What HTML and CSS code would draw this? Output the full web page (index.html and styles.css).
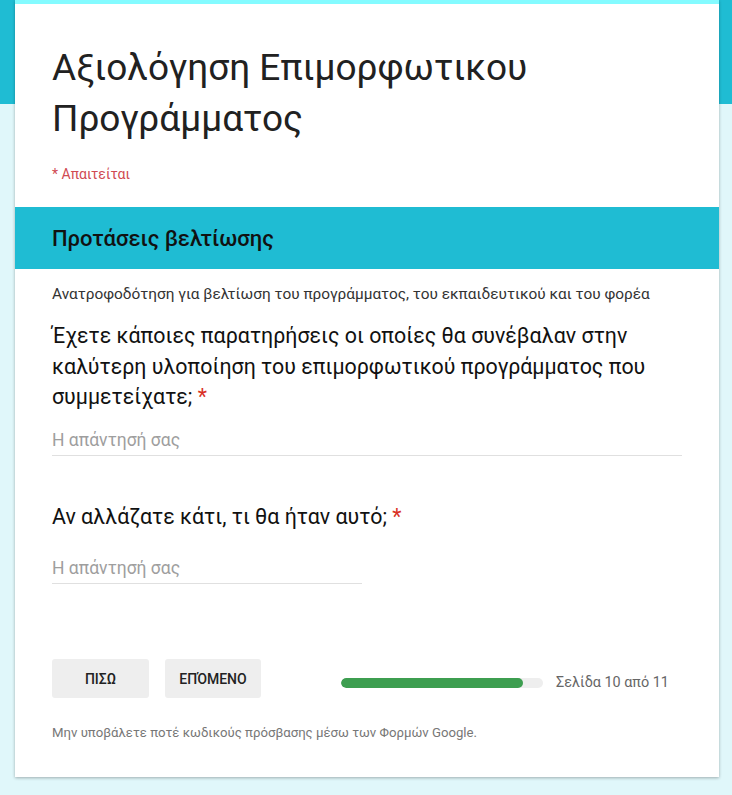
FILE: index.html
```html
<!DOCTYPE html>
<html lang="el">
<head>
<meta charset="utf-8">
<title>Αξιολόγηση Επιμορφωτικου Προγράμματος</title>
<link rel="stylesheet" href="styles.css">
</head>
<body>
<div class="card">
  <div class="header">
    <h1 class="title">Αξιολόγηση Επιμορφωτικου Προγράμματος</h1>
    <div class="required-note">* Απαιτείται</div>
  </div>
  <div class="section-bar">Προτάσεις βελτίωσης</div>
  <div class="body">
    <div class="description">Ανατροφοδότηση για βελτίωση του προγράμματος, του εκπαιδευτικού και του φορέα</div>
    <div class="question q1">
      <div class="q-text">Έχετε κάποιες παρατηρήσεις οι οποίες θα συνέβαλαν στην καλύτερη υλοποίηση του επιμορφωτικού προγράμματος που συμμετείχατε; <span class="star">*</span></div>
      <div class="answer wide">Η απάντησή σας</div>
    </div>
    <div class="question q2">
      <div class="q-text">Αν αλλάζατε κάτι, τι θα ήταν αυτό; <span class="star">*</span></div>
      <div class="answer narrow">Η απάντησή σας</div>
    </div>
    <div class="nav">
      <div class="btn btn-back">ΠΙΣΩ</div>
      <div class="btn btn-next">ΕΠΌΜΕΝΟ</div>
      <div class="progress">
        <div class="track"><div class="fill" style="width:90%"></div></div>
        <div class="page-label">Σελίδα 10 από 11</div>
      </div>
    </div>
    <div class="footer">Μην υποβάλετε ποτέ κωδικούς πρόσβασης μέσω των Φορμών Google.</div>
  </div>
</div>
</body>
</html>
```

FILE: styles.css
```css
html, body {
  margin: 0;
  padding: 0;
}
body {
  background: linear-gradient(#1fbcd3 0, #1fbcd3 104px, #e0f7fa 104px);
  min-height: 795px;
  font-family: Roboto, "Noto Sans", sans-serif;
  color: #202124;
}
.card {
  width: 704px;
  margin-left: 15px;
  background: #fff;
  border-top: 4px solid #84fbff;
  box-shadow: 0 1px 3px rgba(0,0,0,0.3);
}
.header {
  padding: 38px 37px 23px;
}
.title {
  margin: 0;
  font-size: 37px;
  line-height: 51px;
  font-weight: 400;
  color: #212121;
}
.required-note {
  margin-top: 20px;
  font-size: 14px;
  line-height: 20px;
  color: #d04a52;
}
.section-bar {
  background: #1fbcd3;
  height: 62px;
  padding: 0 37px;
  display: flex;
  align-items: center;
  font-size: 22px;
  font-weight: 500;
  color: #111;
}
.body {
  padding: 15px 37px 36px;
}
.description {
  font-size: 15.4px;
  line-height: 20px;
  color: #333;
}
.q1 {
  margin-top: 17px;
}
.q2 {
  margin-top: 46px;
}
.q-text {
  font-size: 21.4px;
  line-height: 30.5px;
  color: #111;
}
.star {
  color: #d93025;
}
.answer {
  margin-top: 17px;
  font-size: 17.5px;
  line-height: 20px;
  color: #9e9e9e;
  padding-bottom: 5px;
  border-bottom: 1px solid #e0e0e0;
}
.q2 .answer {
  margin-top: 26px;
}
.wide {
  width: 630px;
}
.narrow {
  width: 310px;
}
.nav {
  margin-top: 75px;
  display: flex;
  align-items: center;
}
.btn {
  height: 39px;
  box-sizing: border-box;
  display: flex;
  align-items: center;
  justify-content: center;
  background: #eeeeee;
  border-radius: 3px;
  font-size: 14px;
  font-weight: 500;
  color: #222;
  margin-right: 16px;
}
.btn-back {
  width: 97px;
}
.btn-next {
  width: 96px;
}
.progress {
  display: flex;
  align-items: center;
  margin-left: 64px;
  margin-top: 8px;
}
.track {
  width: 202px;
  height: 10px;
  border-radius: 5px;
  background: #eeeeee;
  overflow: hidden;
}
.fill {
  height: 100%;
  background: #3d9e50;
  border-radius: 5px;
}
.page-label {
  margin-left: 13px;
  font-size: 14.4px;
  color: #666;
}
.footer {
  margin-top: 27px;
  font-size: 13.2px;
  line-height: 16px;
  color: #777;
}
```
